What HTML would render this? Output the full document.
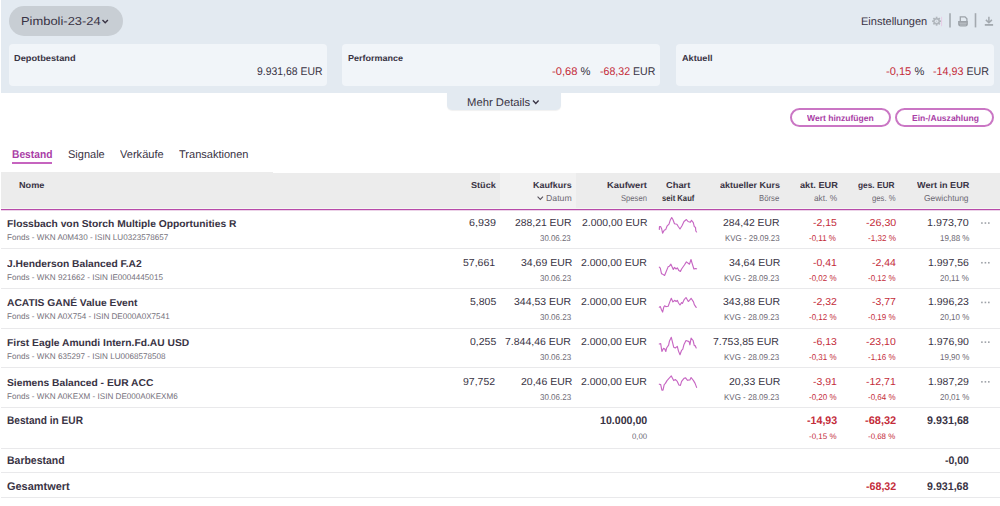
<!DOCTYPE html>
<html><head><meta charset="utf-8"><title>Depot</title><style>
html,body{margin:0;padding:0;background:#fff;}
body{width:1000px;height:506px;position:relative;overflow:hidden;font-family:"Liberation Sans",sans-serif;color:#393344;}
.t{position:absolute;white-space:nowrap;line-height:1;transform-origin:0 0;text-rendering:geometricPrecision;}
.b{position:absolute;}
</style></head><body>
<div class="b" style="left:1px;top:0;width:999px;height:93px;background:#e3eaf1"></div>
<div class="b" style="left:8.5px;top:6px;width:114.5px;height:30px;border-radius:15px;background:#c8ced4"></div>
<div class="b" style="left:8.5px;top:43.5px;width:318.3px;height:42.5px;border-radius:4px;background:#f1f5f9"></div>
<div class="b" style="left:342px;top:43.5px;width:318.3px;height:42.5px;border-radius:4px;background:#f1f5f9"></div>
<div class="b" style="left:676px;top:43.5px;width:318.3px;height:42.5px;border-radius:4px;background:#f1f5f9"></div>
<div class="b" style="left:447px;top:92px;width:114px;height:18px;border-radius:0 0 5px 5px;background:#e3eaf1;box-shadow:0 1px 1px rgba(0,0,0,0.06)"></div>
<div class="b" style="left:790px;top:108px;width:96.5px;height:15px;border:2px solid #ca76c4;border-radius:10px"></div>
<div class="b" style="left:895px;top:108px;width:95px;height:15px;border:2px solid #ca76c4;border-radius:10px"></div>
<div class="b" style="left:11.7px;top:162px;width:40.3px;height:2px;background:#c664bf"></div>
<div class="b" style="left:1px;top:172px;width:272px;height:36px;background:#ececec"></div><div class="b" style="left:273px;top:173px;width:727px;height:35px;background:#ececec"></div><div class="b" style="left:1px;top:208px;width:999px;height:1px;background:#f3f8f3"></div>
<div class="b" style="left:500px;top:173px;width:76px;height:35px;background:#f2f2f2"></div>
<div class="b" style="left:1px;top:209px;width:999px;height:1px;background:#b84aaa"></div><div class="b" style="left:1px;top:210px;width:999px;height:1px;background:#ecd3e8"></div>
<div class="b" style="left:1px;top:248px;width:999px;height:1px;background:#e9e9eb"></div>
<div class="b" style="left:1px;top:288px;width:999px;height:1px;background:#e9e9eb"></div>
<div class="b" style="left:1px;top:328px;width:999px;height:1px;background:#e9e9eb"></div>
<div class="b" style="left:1px;top:367px;width:999px;height:1px;background:#e9e9eb"></div>
<div class="b" style="left:1px;top:407px;width:999px;height:1px;background:#e9e9eb"></div>
<div class="b" style="left:1px;top:447.5px;width:999px;height:1px;background:#e9e9eb"></div>
<div class="b" style="left:1px;top:472px;width:999px;height:1px;background:#e9e9eb"></div>
<div class="b" style="left:1px;top:497px;width:999px;height:1px;background:#e9e9eb"></div>
<svg class="b" style="left:0;top:0" width="1000" height="506" viewBox="0 0 1000 506"><polyline points="102.5,20 105.2,22.7 107.9,20" fill="none" stroke="#393344" stroke-width="1.4"/><polyline points="533,100.6 535.8,103.4 538.6,100.6" fill="none" stroke="#393344" stroke-width="1.4"/><polyline points="537.6,196.7 540.3,199.4 543,196.7" fill="none" stroke="#55505a" stroke-width="1.05"/><g transform="translate(936.6,21.2)"><circle r="3.3" fill="#b0b6bc"/><rect x="-0.85" y="-4.5" width="1.7" height="2" fill="#b0b6bc" transform="rotate(0)"/><rect x="-0.85" y="-4.5" width="1.7" height="2" fill="#b0b6bc" transform="rotate(45)"/><rect x="-0.85" y="-4.5" width="1.7" height="2" fill="#b0b6bc" transform="rotate(90)"/><rect x="-0.85" y="-4.5" width="1.7" height="2" fill="#b0b6bc" transform="rotate(135)"/><rect x="-0.85" y="-4.5" width="1.7" height="2" fill="#b0b6bc" transform="rotate(180)"/><rect x="-0.85" y="-4.5" width="1.7" height="2" fill="#b0b6bc" transform="rotate(225)"/><rect x="-0.85" y="-4.5" width="1.7" height="2" fill="#b0b6bc" transform="rotate(270)"/><rect x="-0.85" y="-4.5" width="1.7" height="2" fill="#b0b6bc" transform="rotate(315)"/><circle r="1.8" fill="#dfe5ec"/><circle r="0.7" fill="#c8ced4"/></g><line x1="941.6" y1="16.8" x2="941.6" y2="26.2" stroke="#e8c4e2" stroke-width="0.8"/><line x1="950" y1="13.2" x2="950" y2="27.4" stroke="#a3a9af" stroke-width="1.6"/><line x1="975.5" y1="13.2" x2="975.5" y2="27.4" stroke="#a3a9af" stroke-width="1.6"/><path d="M960.3,21 V16.9 H965 L966.9,18.8 V21" fill="#e3eaf1" stroke="#9da3a9" stroke-width="1.3"/><path d="M958.1,21 H967.9 V23.8 Q967.9,26.5 965.4,26.5 H960.6 Q958.1,26.5 958.1,23.8 Z" fill="#9da3a9"/><line x1="959.5" y1="23.2" x2="966.5" y2="23.2" stroke="#cfd4da" stroke-width="0.7"/><line x1="960" y1="25" x2="966" y2="25" stroke="#cfd4da" stroke-width="0.6"/><g fill="none" stroke="#a3a9af" stroke-width="1.5"><path d="M988.9,16.8 V22.6 M985.9,19.9 L988.9,22.8 L991.9,19.9"/><path d="M984.8,24.9 H993.1" stroke-width="1.8"/></g><polyline points="659.3,229.4 659.5,226.6 660.7,226.6 661.7,229.0 662.6,233.1 664.2,230.2 665.8,229.4 667.0,226.2 669.0,224.2 670.2,220.3 671.7,217.5 672.9,219.5 674.5,223.8 676.9,224.2 678.1,226.2 680.0,229.0 682.0,225.8 684.0,221.5 686.4,219.5 688.0,221.5 690.3,222.3 691.5,220.3 693.3,222.6 694.3,226.6 695.5,227.4 695.8,231.0 696.6,232.0" fill="none" stroke="#c767c3" stroke-width="1.15" stroke-linejoin="round" stroke-linecap="round"/><polyline points="659.3,267.2 660.3,268.2 661.5,273.7 662.6,274.1 664.6,275.5 665.8,272.5 668.2,266.6 669.4,266.2 670.9,264.2 673.3,269.4 674.5,267.4 676.1,269.0 677.3,267.8 678.9,270.6 680.4,271.5 681.6,269.0 684.4,265.0 686.4,261.9 689.5,264.2 691.0,259.5 691.9,262.6 693.9,269.0 695.5,268.6 696.6,268.8" fill="none" stroke="#c767c3" stroke-width="1.15" stroke-linejoin="round" stroke-linecap="round"/><polyline points="659.3,307.2 660.3,306.6 661.5,309.8 662.6,312.1 663.8,307.0 664.6,305.8 665.8,306.6 668.2,306.2 669.8,301.9 671.3,298.3 672.9,301.9 674.9,300.3 676.1,301.5 677.3,300.3 678.5,303.0 680.0,305.0 681.6,302.6 682.4,303.4 684.0,299.9 686.0,297.5 688.3,301.5 689.5,300.3 691.1,298.3 693.5,301.9 694.3,304.6 696.2,307.4" fill="none" stroke="#c767c3" stroke-width="1.15" stroke-linejoin="round" stroke-linecap="round"/><polyline points="659.3,344.0 660.7,343.6 661.9,351.5 663.4,348.4 664.6,348.8 665.8,351.5 666.6,348.0 668.6,345.2 669.4,341.3 671.3,337.3 673.7,347.2 675.3,348.0 677.3,346.4 678.5,351.1 680.0,354.7 681.6,350.3 682.8,349.2 684.0,344.4 686.0,340.5 689.1,341.6 689.9,344.8 691.1,338.1 693.1,340.5 694.3,345.6 695.1,345.6 696.2,348.0" fill="none" stroke="#c767c3" stroke-width="1.15" stroke-linejoin="round" stroke-linecap="round"/><polyline points="659.3,384.2 660.7,384.6 661.9,390.1 663.0,390.1 664.2,384.6 665.4,383.4 667.0,380.6 669.0,378.3 671.3,375.9 673.7,380.6 675.3,379.5 677.3,381.4 678.9,385.0 680.4,385.4 681.6,381.4 684.0,378.3 685.6,377.9 687.5,380.3 689.9,379.9 691.1,377.5 693.5,380.6 695.1,383.4 696.6,387.4" fill="none" stroke="#c767c3" stroke-width="1.15" stroke-linejoin="round" stroke-linecap="round"/><rect x="981.1" y="222.25" width="1.6" height="1.6" fill="#9ea2a8"/><rect x="984.6" y="222.25" width="1.6" height="1.6" fill="#9ea2a8"/><rect x="988.0" y="222.25" width="1.6" height="1.6" fill="#9ea2a8"/><rect x="981.1" y="261.95" width="1.6" height="1.6" fill="#9ea2a8"/><rect x="984.6" y="261.95" width="1.6" height="1.6" fill="#9ea2a8"/><rect x="988.0" y="261.95" width="1.6" height="1.6" fill="#9ea2a8"/><rect x="981.1" y="301.65" width="1.6" height="1.6" fill="#9ea2a8"/><rect x="984.6" y="301.65" width="1.6" height="1.6" fill="#9ea2a8"/><rect x="988.0" y="301.65" width="1.6" height="1.6" fill="#9ea2a8"/><rect x="981.1" y="341.35" width="1.6" height="1.6" fill="#9ea2a8"/><rect x="984.6" y="341.35" width="1.6" height="1.6" fill="#9ea2a8"/><rect x="988.0" y="341.35" width="1.6" height="1.6" fill="#9ea2a8"/><rect x="981.1" y="381.05" width="1.6" height="1.6" fill="#9ea2a8"/><rect x="984.6" y="381.05" width="1.6" height="1.6" fill="#9ea2a8"/><rect x="988.0" y="381.05" width="1.6" height="1.6" fill="#9ea2a8"/></svg>
<div class="t" style="left:20.89px;top:16px;font-size:11.6px;transform:scaleX(1.114);">Pimboli-23-24</div>
<div class="t" style="left:861.00px;top:17px;font-size:11.0px;transform:scaleX(1.003);">Einstellungen</div>
<div class="t" style="left:14.30px;top:54px;font-size:8.6px;font-weight:700;transform:scaleX(1.074);">Depotbestand</div>
<div class="t" style="left:347.50px;top:54px;font-size:8.6px;font-weight:700;transform:scaleX(1.047);">Performance</div>
<div class="t" style="left:681.50px;top:54px;font-size:8.6px;font-weight:700;transform:scaleX(1.064);">Aktuell</div>
<div class="t" style="left:256.70px;top:67px;font-size:11.2px;transform:scaleX(0.933);">9.931,68 EUR</div>
<div class="t" style="left:552.00px;top:67px;font-size:11.2px;"><span style="color:#c42c3a">-0,68</span> %</div>
<div class="t" style="left:600.15px;top:67px;font-size:11.2px;transform:scaleX(0.947);"><span style="color:#c42c3a">-68,32</span> EUR</div>
<div class="t" style="left:885.61px;top:67px;font-size:11.2px;transform:scaleX(0.992);"><span style="color:#c42c3a">-0,15</span> %</div>
<div class="t" style="left:933.44px;top:67px;font-size:11.2px;transform:scaleX(0.958);"><span style="color:#c42c3a">-14,93</span> EUR</div>
<div class="t" style="left:466.99px;top:98px;font-size:11.2px;transform:scaleX(1.006);">Mehr Details</div>
<div class="t" style="left:807.00px;top:114px;font-size:8.6px;font-weight:700;color:#a93da6;transform:scaleX(0.994);">Wert hinzufügen</div>
<div class="t" style="left:911.50px;top:114px;font-size:8.6px;font-weight:700;color:#a93da6;transform:scaleX(0.993);">Ein-/Auszahlung</div>
<div class="t" style="left:11.70px;top:150px;font-size:11.2px;font-weight:700;color:#a93da6;transform:scaleX(0.916);">Bestand</div>
<div class="t" style="left:67.60px;top:150px;font-size:11.2px;transform:scaleX(0.984);">Signale</div>
<div class="t" style="left:119.70px;top:150px;font-size:11.2px;transform:scaleX(0.989);">Verkäufe</div>
<div class="t" style="left:179.00px;top:150px;font-size:11.2px;transform:scaleX(0.986);">Transaktionen</div>
<div class="t" style="left:19.00px;top:181px;font-size:8.6px;font-weight:700;transform:scaleX(1.062);">Nome</div>
<div class="t" style="left:470.80px;top:181px;font-size:8.6px;font-weight:700;transform:scaleX(1.061);">Stück</div>
<div class="t" style="left:532.80px;top:181px;font-size:8.6px;font-weight:700;transform:scaleX(1.038);">Kaufkurs</div>
<div class="t" style="left:545.80px;top:194px;font-size:8.6px;color:#6d6973;transform:scaleX(1.016);">Datum</div>
<div class="t" style="left:606.80px;top:181px;font-size:8.6px;font-weight:700;transform:scaleX(1.086);">Kaufwert</div>
<div class="t" style="left:621.20px;top:194px;font-size:8.6px;color:#6d6973;transform:scaleX(0.890);">Spesen</div>
<div class="t" style="left:665.90px;top:181px;font-size:8.6px;font-weight:700;transform:scaleX(1.083);">Chart</div>
<div class="t" style="left:662.00px;top:194px;font-size:8.6px;font-weight:700;color:#37333c;transform:scaleX(0.892);">seit Kauf</div>
<div class="t" style="left:719.50px;top:181px;font-size:8.6px;font-weight:700;transform:scaleX(1.047);">aktueller Kurs</div>
<div class="t" style="left:758.50px;top:194px;font-size:8.6px;color:#6d6973;transform:scaleX(0.900);">Börse</div>
<div class="t" style="left:799.70px;top:181px;font-size:8.6px;font-weight:700;transform:scaleX(1.071);">akt. EUR</div>
<div class="t" style="left:814.00px;top:194px;font-size:8.6px;color:#6d6973;transform:scaleX(0.967);">akt. %</div>
<div class="t" style="left:858.20px;top:181px;font-size:8.6px;font-weight:700;transform:scaleX(0.968);">ges. EUR</div>
<div class="t" style="left:871.70px;top:194px;font-size:8.6px;color:#6d6973;transform:scaleX(0.896);">ges. %</div>
<div class="t" style="left:916.70px;top:181px;font-size:8.6px;font-weight:700;transform:scaleX(1.055);">Wert in EUR</div>
<div class="t" style="left:924.20px;top:194px;font-size:8.6px;color:#6d6973;transform:scaleX(0.982);">Gewichtung</div>
<div class="t" style="left:6.60px;top:220px;font-size:10.0px;font-weight:700;transform:scaleX(1.027);">Flossbach von Storch Multiple Opportunities R</div>
<div class="t" style="left:6.60px;top:234px;font-size:8.2px;color:#75717b;transform:scaleX(0.990);">Fonds - WKN A0M430 - ISIN LU0323578657</div>
<div class="t" style="left:469.00px;top:219px;font-size:10.2px;transform:scaleX(1.056);">6,939</div>
<div class="t" style="left:515.00px;top:219px;font-size:10.2px;transform:scaleX(1.018);">288,21 EUR</div>
<div class="t" style="left:540.40px;top:234px;font-size:8.5px;color:#6d6973;transform:scaleX(0.927);">30.06.23</div>
<div class="t" style="left:581.80px;top:219px;font-size:10.2px;transform:scaleX(1.022);">2.000,00 EUR</div>
<div class="t" style="left:723.20px;top:219px;font-size:10.2px;transform:scaleX(1.018);">284,42 EUR</div>
<div class="t" style="left:724.70px;top:234px;font-size:8.5px;color:#6d6973;transform:scaleX(0.931);">KVG - 29.09.23</div>
<div class="t" style="left:813.00px;top:219px;font-size:10.2px;color:#c42c3a;transform:scaleX(1.030);">-2,15</div>
<div class="t" style="left:809.40px;top:234px;font-size:8.5px;color:#c42c3a;transform:scaleX(0.941);">-0,11 %</div>
<div class="t" style="left:865.60px;top:219px;font-size:10.2px;color:#c42c3a;transform:scaleX(1.048);">-26,30</div>
<div class="t" style="left:868.00px;top:234px;font-size:8.5px;color:#c42c3a;transform:scaleX(0.955);">-1,32 %</div>
<div class="t" style="left:926.65px;top:219px;font-size:10.2px;transform:scaleX(1.054);">1.973,70</div>
<div class="t" style="left:939.50px;top:234px;font-size:8.5px;color:#6d6973;transform:scaleX(0.945);">19,88 %</div>
<div class="t" style="left:6.60px;top:260px;font-size:10.0px;font-weight:700;transform:scaleX(1.027);">J.Henderson Balanced F.A2</div>
<div class="t" style="left:6.60px;top:274px;font-size:8.2px;color:#75717b;transform:scaleX(0.990);">Fonds - WKN 921662 - ISIN IE0004445015</div>
<div class="t" style="left:463.46px;top:259px;font-size:10.2px;transform:scaleX(1.030);">57,661</div>
<div class="t" style="left:520.51px;top:259px;font-size:10.2px;transform:scaleX(1.030);">34,69 EUR</div>
<div class="t" style="left:539.93px;top:274px;font-size:8.5px;color:#6d6973;transform:scaleX(0.941);">30.06.23</div>
<div class="t" style="left:581.25px;top:259px;font-size:10.2px;transform:scaleX(1.030);">2.000,00 EUR</div>
<div class="t" style="left:728.71px;top:259px;font-size:10.2px;transform:scaleX(1.030);">34,64 EUR</div>
<div class="t" style="left:724.10px;top:274px;font-size:8.5px;color:#6d6973;transform:scaleX(0.941);">KVG - 28.09.23</div>
<div class="t" style="left:813.00px;top:259px;font-size:10.2px;color:#c42c3a;transform:scaleX(1.030);">-0,41</div>
<div class="t" style="left:809.40px;top:274px;font-size:8.5px;color:#c42c3a;transform:scaleX(0.941);">-0,02 %</div>
<div class="t" style="left:872.30px;top:259px;font-size:10.2px;color:#c42c3a;transform:scaleX(1.030);">-2,44</div>
<div class="t" style="left:868.40px;top:274px;font-size:8.5px;color:#c42c3a;transform:scaleX(0.941);">-0,12 %</div>
<div class="t" style="left:927.58px;top:259px;font-size:10.2px;transform:scaleX(1.030);">1.997,56</div>
<div class="t" style="left:939.62px;top:274px;font-size:8.5px;color:#6d6973;transform:scaleX(0.941);">20,11 %</div>
<div class="t" style="left:6.60px;top:299px;font-size:10.0px;font-weight:700;transform:scaleX(1.027);">ACATIS GANÉ Value Event</div>
<div class="t" style="left:6.60px;top:313px;font-size:8.2px;color:#75717b;transform:scaleX(0.990);">Fonds - WKN A0X754 - ISIN DE000A0X7541</div>
<div class="t" style="left:469.64px;top:298px;font-size:10.2px;transform:scaleX(1.030);">5,805</div>
<div class="t" style="left:514.33px;top:298px;font-size:10.2px;transform:scaleX(1.030);">344,53 EUR</div>
<div class="t" style="left:539.93px;top:313px;font-size:8.5px;color:#6d6973;transform:scaleX(0.941);">30.06.23</div>
<div class="t" style="left:581.25px;top:298px;font-size:10.2px;transform:scaleX(1.030);">2.000,00 EUR</div>
<div class="t" style="left:722.53px;top:298px;font-size:10.2px;transform:scaleX(1.030);">343,88 EUR</div>
<div class="t" style="left:724.10px;top:313px;font-size:8.5px;color:#6d6973;transform:scaleX(0.941);">KVG - 28.09.23</div>
<div class="t" style="left:813.00px;top:298px;font-size:10.2px;color:#c42c3a;transform:scaleX(1.030);">-2,32</div>
<div class="t" style="left:809.40px;top:313px;font-size:8.5px;color:#c42c3a;transform:scaleX(0.941);">-0,12 %</div>
<div class="t" style="left:872.30px;top:298px;font-size:10.2px;color:#c42c3a;transform:scaleX(1.030);">-3,77</div>
<div class="t" style="left:868.40px;top:313px;font-size:8.5px;color:#c42c3a;transform:scaleX(0.941);">-0,19 %</div>
<div class="t" style="left:927.58px;top:298px;font-size:10.2px;transform:scaleX(1.030);">1.996,23</div>
<div class="t" style="left:939.62px;top:313px;font-size:8.5px;color:#6d6973;transform:scaleX(0.941);">20,10 %</div>
<div class="t" style="left:6.60px;top:339px;font-size:10.0px;font-weight:700;transform:scaleX(1.027);">First Eagle Amundi Intern.Fd.AU USD</div>
<div class="t" style="left:6.60px;top:353px;font-size:8.2px;color:#75717b;transform:scaleX(0.990);">Fonds - WKN 635297 - ISIN LU0068578508</div>
<div class="t" style="left:469.64px;top:338px;font-size:10.2px;transform:scaleX(1.030);">0,255</div>
<div class="t" style="left:505.05px;top:338px;font-size:10.2px;transform:scaleX(1.030);">7.844,46 EUR</div>
<div class="t" style="left:539.93px;top:353px;font-size:8.5px;color:#6d6973;transform:scaleX(0.941);">30.06.23</div>
<div class="t" style="left:581.25px;top:338px;font-size:10.2px;transform:scaleX(1.030);">2.000,00 EUR</div>
<div class="t" style="left:713.25px;top:338px;font-size:10.2px;transform:scaleX(1.030);">7.753,85 EUR</div>
<div class="t" style="left:724.10px;top:353px;font-size:8.5px;color:#6d6973;transform:scaleX(0.941);">KVG - 28.09.23</div>
<div class="t" style="left:813.00px;top:338px;font-size:10.2px;color:#c42c3a;transform:scaleX(1.030);">-6,13</div>
<div class="t" style="left:809.40px;top:353px;font-size:8.5px;color:#c42c3a;transform:scaleX(0.941);">-0,31 %</div>
<div class="t" style="left:866.12px;top:338px;font-size:10.2px;color:#c42c3a;transform:scaleX(1.030);">-23,10</div>
<div class="t" style="left:868.40px;top:353px;font-size:8.5px;color:#c42c3a;transform:scaleX(0.941);">-1,16 %</div>
<div class="t" style="left:927.58px;top:338px;font-size:10.2px;transform:scaleX(1.030);">1.976,90</div>
<div class="t" style="left:939.62px;top:353px;font-size:8.5px;color:#6d6973;transform:scaleX(0.941);">19,90 %</div>
<div class="t" style="left:6.60px;top:379px;font-size:10.0px;font-weight:700;transform:scaleX(1.027);">Siemens Balanced - EUR ACC</div>
<div class="t" style="left:6.60px;top:393px;font-size:8.2px;color:#75717b;transform:scaleX(0.990);">Fonds - WKN A0KEXM - ISIN DE000A0KEXM6</div>
<div class="t" style="left:463.46px;top:378px;font-size:10.2px;transform:scaleX(1.030);">97,752</div>
<div class="t" style="left:520.51px;top:378px;font-size:10.2px;transform:scaleX(1.030);">20,46 EUR</div>
<div class="t" style="left:539.93px;top:393px;font-size:8.5px;color:#6d6973;transform:scaleX(0.941);">30.06.23</div>
<div class="t" style="left:581.25px;top:378px;font-size:10.2px;transform:scaleX(1.030);">2.000,00 EUR</div>
<div class="t" style="left:728.71px;top:378px;font-size:10.2px;transform:scaleX(1.030);">20,33 EUR</div>
<div class="t" style="left:724.10px;top:393px;font-size:8.5px;color:#6d6973;transform:scaleX(0.941);">KVG - 28.09.23</div>
<div class="t" style="left:813.00px;top:378px;font-size:10.2px;color:#c42c3a;transform:scaleX(1.030);">-3,91</div>
<div class="t" style="left:809.40px;top:393px;font-size:8.5px;color:#c42c3a;transform:scaleX(0.941);">-0,20 %</div>
<div class="t" style="left:866.12px;top:378px;font-size:10.2px;color:#c42c3a;transform:scaleX(1.030);">-12,71</div>
<div class="t" style="left:868.40px;top:393px;font-size:8.5px;color:#c42c3a;transform:scaleX(0.941);">-0,64 %</div>
<div class="t" style="left:927.58px;top:378px;font-size:10.2px;transform:scaleX(1.030);">1.987,29</div>
<div class="t" style="left:939.62px;top:393px;font-size:8.5px;color:#6d6973;transform:scaleX(0.941);">20,01 %</div>
<div class="t" style="left:6.50px;top:416px;font-size:11.0px;font-weight:700;transform:scaleX(0.921);">Bestand in EUR</div>
<div class="t" style="left:599.90px;top:416px;font-size:11.0px;font-weight:700;transform:scaleX(0.965);">10.000,00</div>
<div class="t" style="left:631.80px;top:433px;font-size:8.0px;color:#6d6973;transform:scaleX(0.975);">0,00</div>
<div class="t" style="left:807.00px;top:416px;font-size:11.0px;font-weight:700;color:#c42c3a;transform:scaleX(0.968);">-14,93</div>
<div class="t" style="left:809.00px;top:433px;font-size:8.0px;color:#c42c3a;">-0,15 %</div>
<div class="t" style="left:865.00px;top:416px;font-size:11.0px;font-weight:700;color:#c42c3a;">-68,32</div>
<div class="t" style="left:868.35px;top:433px;font-size:8.0px;color:#c42c3a;transform:scaleX(0.988);">-0,68 %</div>
<div class="t" style="left:926.60px;top:416px;font-size:11.0px;font-weight:700;transform:scaleX(0.977);">9.931,68</div>
<div class="t" style="left:6.50px;top:456px;font-size:11.0px;font-weight:700;transform:scaleX(0.952);">Barbestand</div>
<div class="t" style="left:944.70px;top:456px;font-size:11.0px;font-weight:700;transform:scaleX(0.956);">-0,00</div>
<div class="t" style="left:6.50px;top:482px;font-size:11.0px;font-weight:700;transform:scaleX(0.995);">Gesamtwert</div>
<div class="t" style="left:866.00px;top:482px;font-size:11.0px;font-weight:700;color:#c42c3a;transform:scaleX(0.968);">-68,32</div>
<div class="t" style="left:926.99px;top:482px;font-size:11.0px;font-weight:700;transform:scaleX(0.968);">9.931,68</div>
</body></html>
